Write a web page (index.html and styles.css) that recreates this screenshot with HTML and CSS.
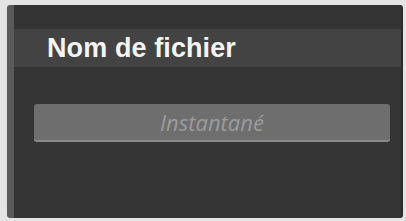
FILE: index.html
```html
<!DOCTYPE html>
<html>
<head>
<meta charset="utf-8">
<link rel="stylesheet" href="styles.css">
</head>
<body>
<div class="frame">
  <div class="panel">
    <div class="panel-top"></div>
    <div class="header"><span class="title">Nom de fichier</span></div>
    <div class="body">
      <div class="field">Instantané</div>
    </div>
  </div>
</div>
</body>
</html>
```
FILE: styles.css
```css
html, body {
  margin: 0;
  padding: 0;
  background: #e4e4e4;
}
.frame {
  width: 406px;
  height: 221px;
  box-sizing: border-box;
  padding: 5px 3px 3px 7px;
}
.panel {
  height: 100%;
  box-sizing: border-box;
  background: #353535;
  border-left: 7px solid #5a5a5a;
  border-right: 2px solid #2c2c2c;
  border-radius: 3px;
  display: flex;
  flex-direction: column;
}
.panel-top {
  height: 24px;
  background: #343434;
}
.header {
  height: 38px;
  background: #434343;
  display: flex;
  align-items: center;
  padding-left: 33px;
}
.title {
  font-family: "Liberation Sans", Arial, sans-serif;
  font-weight: bold;
  font-size: 27px;
  color: #f4f4f4;
  letter-spacing: 0.1px;
}
.body {
  flex: 1;
  padding: 37px 11px 0 20px;
}
.field {
  height: 38px;
  box-sizing: border-box;
  background: #6e6e6e;
  border-bottom: 2px solid #8a8a8a;
  border-radius: 3px;
  display: flex;
  align-items: center;
  justify-content: center;
  font-family: "Open Sans", sans-serif;
  font-style: italic;
  font-size: 22px;
  color: #9c9c9c;
}
```
